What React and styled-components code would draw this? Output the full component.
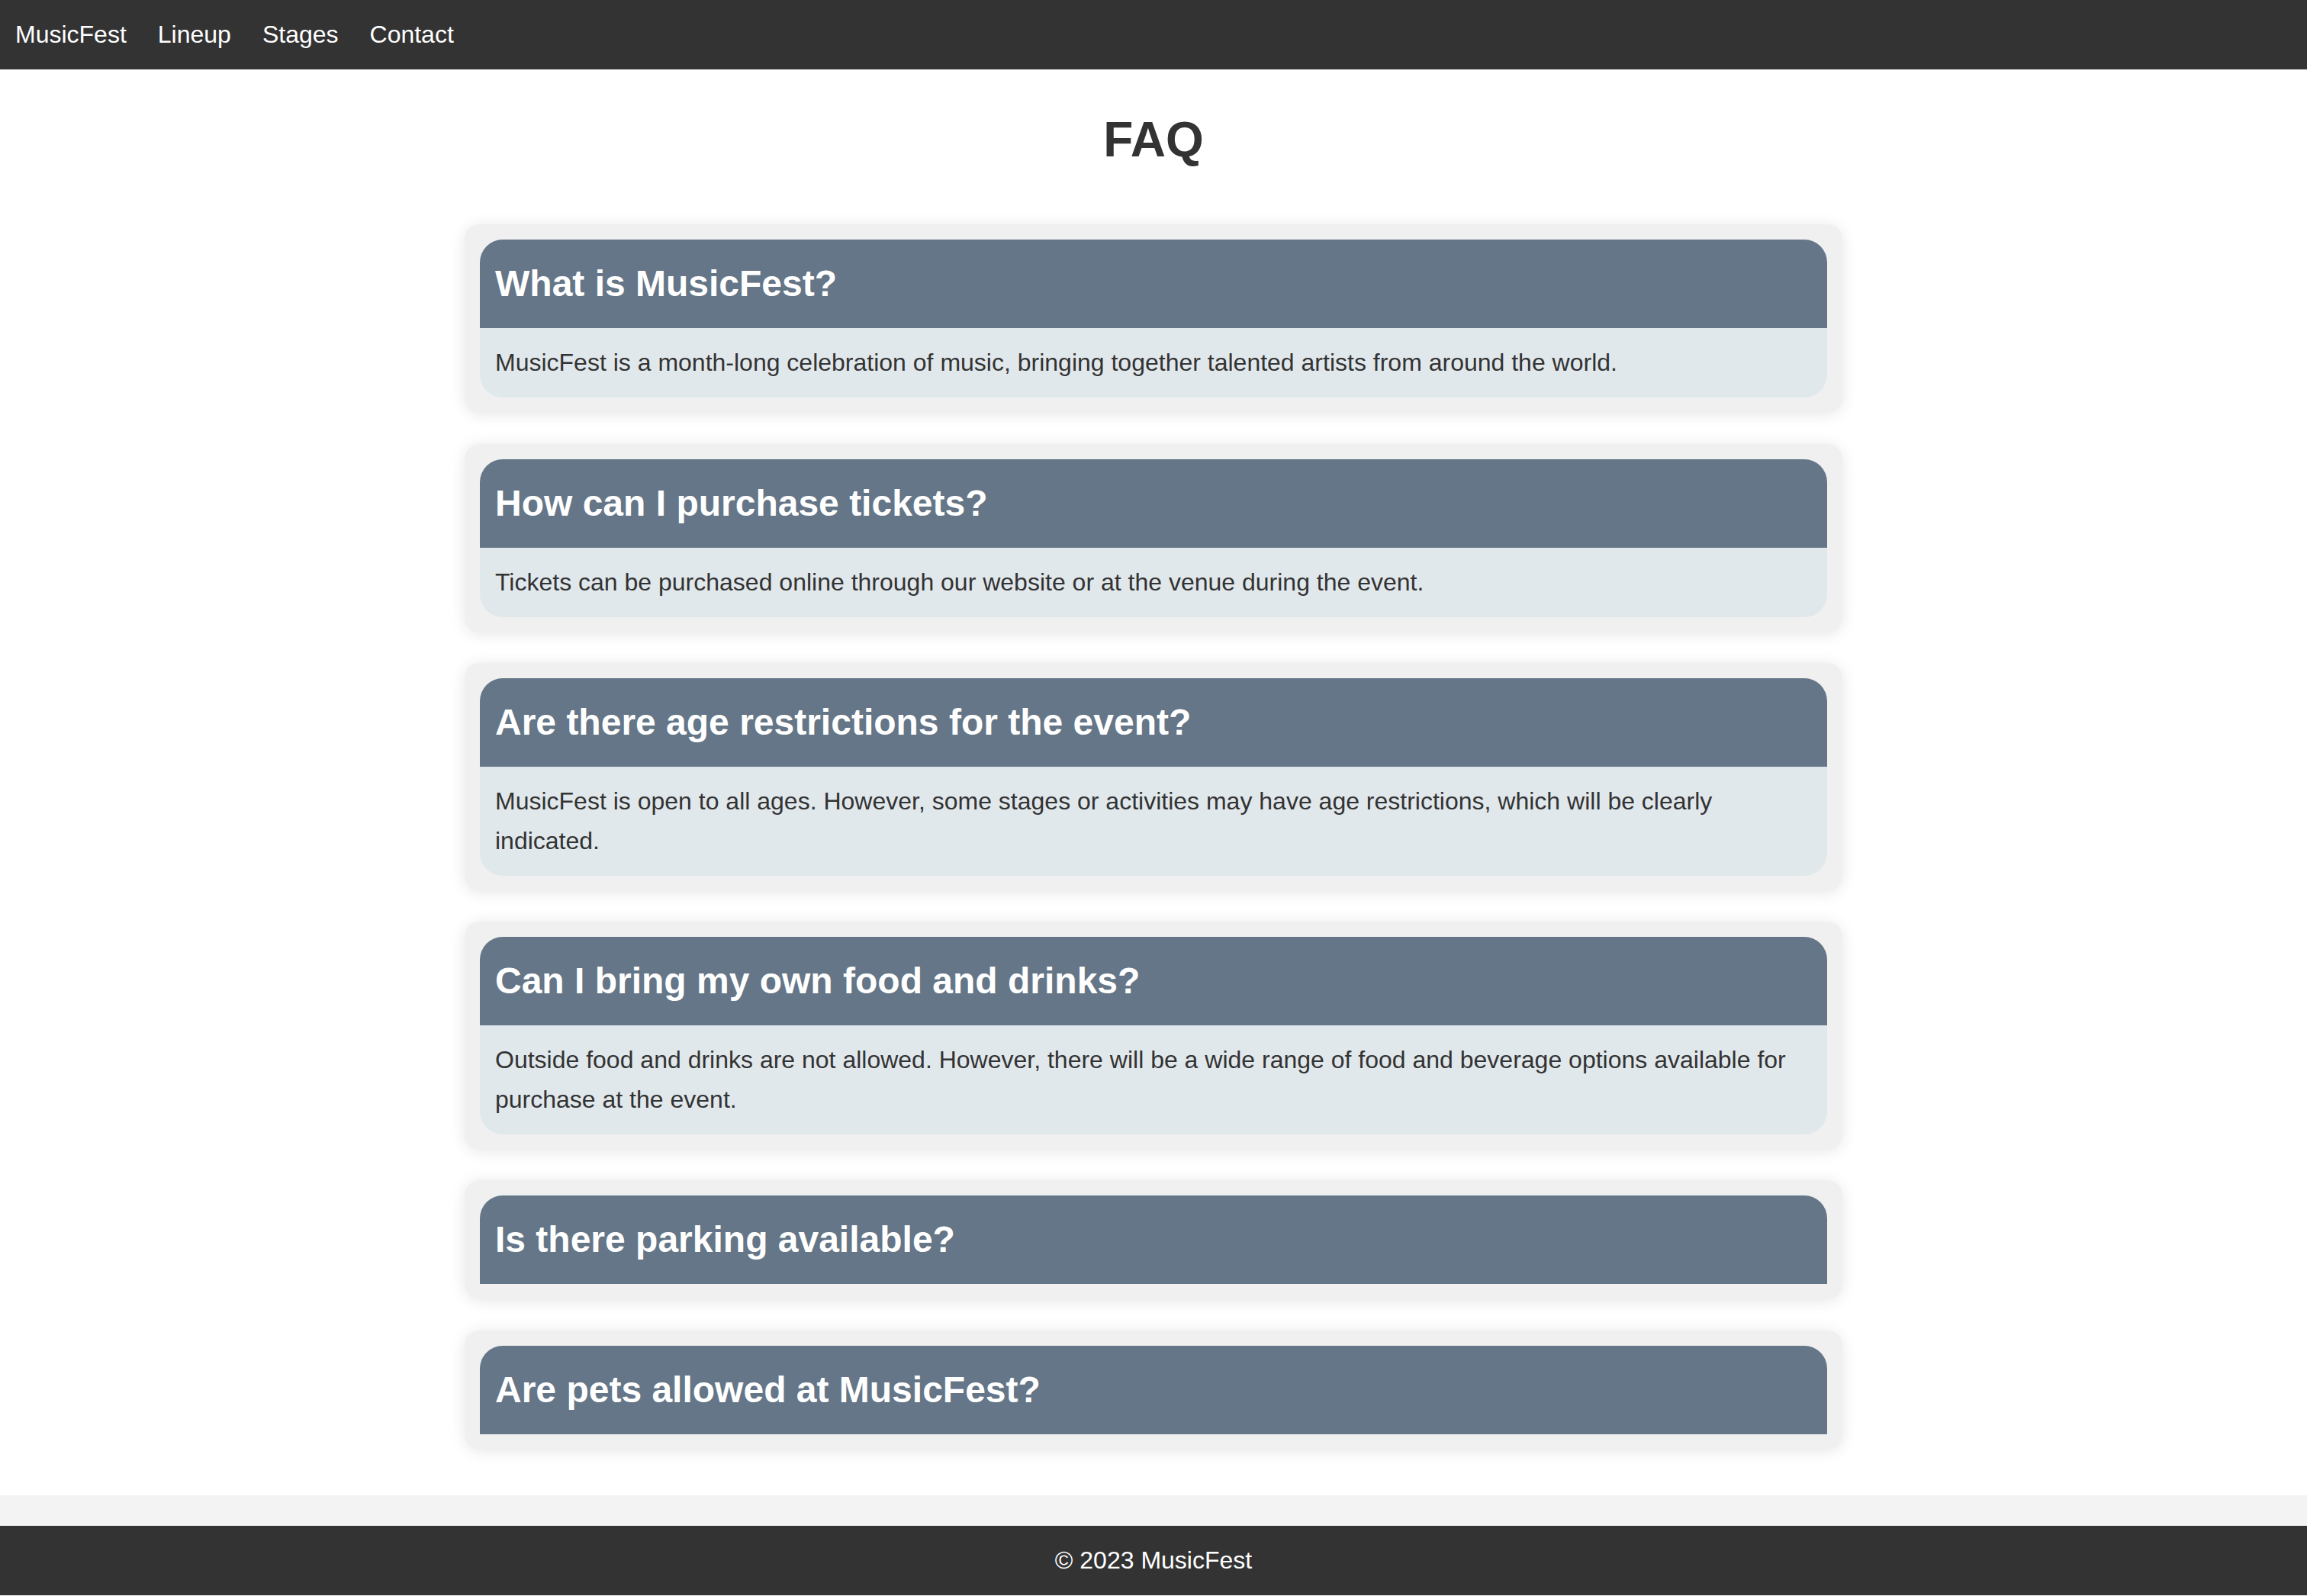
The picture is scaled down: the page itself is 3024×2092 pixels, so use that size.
import styled, { createGlobalStyle } from 'styled-components';

const GlobalStyle = createGlobalStyle`
  * {
    box-sizing: border-box;
  }
  body {
    margin: 0;
    background-color: #f3f3f3;
    font-family: 'Liberation Sans', Arial, sans-serif;
    color: #333333;
  }
`;

const FAQS = [
  {
    question: 'What is MusicFest?',
    answer:
      'MusicFest is a month-long celebration of music, bringing together talented artists from around the world.',
  },
  {
    question: 'How can I purchase tickets?',
    answer:
      'Tickets can be purchased online through our website or at the venue during the event.',
  },
  {
    question: 'Are there age restrictions for the event?',
    answer:
      'MusicFest is open to all ages. However, some stages or activities may have age restrictions, which will be clearly indicated.',
  },
  {
    question: 'Can I bring my own food and drinks?',
    answer:
      'Outside food and drinks are not allowed. However, there will be a wide range of food and beverage options available for purchase at the event.',
  },
  { question: 'Is there parking available?', answer: '' },
  { question: 'Are pets allowed at MusicFest?', answer: '' },
];

const Page = styled.div`
  display: flex;
  flex-direction: column;
  min-height: 100vh;
`;

const Nav = styled.nav`
  height: 91px;
  background-color: #333333;
  display: flex;
  align-items: center;
  padding: 0;
`;

const NavLink = styled.a`
  color: #ffffff;
  font-size: 32px;
  text-decoration: none;
  padding: 0 20px;
  margin-right: 1px;
  cursor: pointer;
`;

const Main = styled.main`
  background-color: #ffffff;
  padding: 55px 0 20px;
  display: flex;
  flex-direction: column;
  align-items: center;
`;

const Title = styled.h1`
  margin: 0 0 74px;
  font-size: 64px;
  font-weight: 700;
  line-height: 74px;
  color: #333333;
  text-align: center;
`;

const FaqList = styled.section`
  width: 1806px;
  display: flex;
  flex-direction: column;
  gap: 40.5px;
  margin-bottom: 40px;
`;

const FaqCard = styled.article`
  background-color: #f0f0f0;
  border-radius: 20px;
  padding: 20px;
  box-shadow: 0 2px 20px rgba(0, 0, 0, 0.1);
`;

const Question = styled.h2`
  margin: 0;
  padding: 29px 20px;
  font-size: 48px;
  font-weight: 700;
  line-height: 58px;
  color: #ffffff;
  background-color: #647687;
  border-radius: 30px 30px 0 0;
`;

const Answer = styled.p`
  margin: 0;
  padding: 20px;
  font-size: 32px;
  line-height: 51.2px;
  color: #333333;
  background-color: #e1e8ec;
  border-radius: 0 0 30px 30px;
`;

const Footer = styled.footer`
  margin-top: 40px;
  height: 91px;
  background-color: #333333;
  color: #ffffff;
  font-size: 32px;
  display: flex;
  align-items: center;
  justify-content: center;
`;

const App = () => {
  return (
    <Page>
      <GlobalStyle />
      <Nav>
        <NavLink>MusicFest</NavLink>
        <NavLink>Lineup</NavLink>
        <NavLink>Stages</NavLink>
        <NavLink>Contact</NavLink>
      </Nav>
      <Main>
        <Title>FAQ</Title>
        <FaqList>
          {FAQS.map((faq) => (
            <FaqCard key={faq.question}>
              <Question>{faq.question}</Question>
              {faq.answer && <Answer>{faq.answer}</Answer>}
            </FaqCard>
          ))}
        </FaqList>
      </Main>
      <Footer>© 2023 MusicFest</Footer>
    </Page>
  );
};

export default App;
